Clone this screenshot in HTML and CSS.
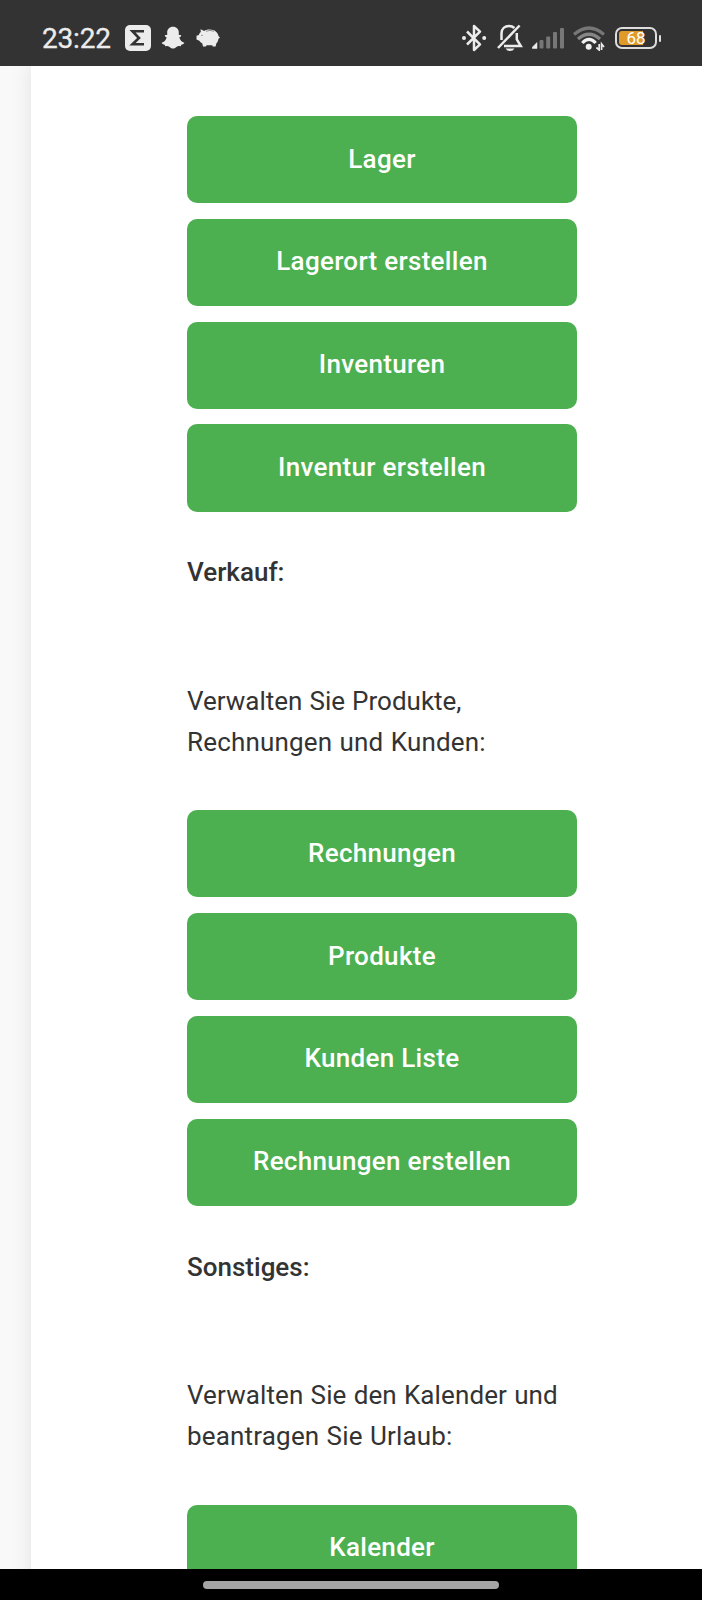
FILE: index.html
```
<!DOCTYPE html>
<html lang="de">
<head>
<meta charset="utf-8">
<title>Lager und Verkauf</title>
<link rel="stylesheet" href="styles.css">
</head>
<body>
<header class="status">
  <div class="status-left">
    <span class="clock">23:22</span>
    <svg class="app-sigma" width="26" height="26" viewBox="0 0 26 26"><rect width="26" height="26" rx="5" fill="#ececec"/><path d="M19 6.200H7.500L14 13L7.500 19.300H19" fill="none" stroke="#333" stroke-width="2.600"/></svg>
    <svg class="app-ghost" width="24" height="24" viewBox="0 0 24 24"><path fill="#ececec" d="M12 .8C8.400.8 6.200 3.300 6.200 6.500V9C5.400 9.300 4.400 8.700 3.900 9.300C3.500 10.200 4.700 11 5.700 11.400C5 14 3 16 .7 16.800C.8 18.200 2.400 18.400 3.700 18.700C4 19.600 4 20.200 4.800 20.200C6 20 7.200 20 8.300 20.700C9.500 21.700 10.500 22.500 12 22.500S14.500 21.700 15.700 20.700C16.800 20 18 20 19.200 20.200C20 20.200 20 19.600 20.300 18.700C21.600 18.400 23.200 18.200 23.300 16.800C21 16 19 14 18.300 11.400C19.300 11 20.500 10.200 20.100 9.300C19.600 8.700 18.600 9.300 17.800 9V6.500C17.800 3.300 15.600.8 12 .8Z"/></svg>
    <svg class="app-pig" width="24" height="20" viewBox="0 0 24 20"><path fill="#ececec" d="M4.500 1.300L8.300 3C10.500 1.200 17 .7 20.300 4C21.800 5.500 22.300 7 22.600 8.300L24 9.500L22.500 10.700C22 13 21.300 14.500 20.300 15.500L19.600 18.600H16.700L16.200 17.200H10.500L10 18.600H7L6.300 15.500C5 14.800 4 13.800 3.300 12.700L.5 11.500V7.800L2.800 7C3.200 5.800 4 4.700 4.800 4.100Z"/><path d="M10 3.300Q14 1.500 18 3.300" fill="none" stroke="#777" stroke-width=".8"/><circle cx="6" cy="7.400" r=".7" fill="#777"/></svg>
  </div>
  <div class="status-right">
    <svg width="26" height="30" viewBox="0 0 26 30"><path d="M6 8.500L19 21.300L13 27V3L19 8.700L6 21.500" fill="none" stroke="#ececec" stroke-width="2.500" stroke-linejoin="round"/><circle cx="3" cy="15" r="2" fill="#ececec"/><circle cx="23.200" cy="15" r="2" fill="#ececec"/></svg>
    <svg class="bell" width="26" height="28" viewBox="0 0 26 28"><g fill="none" stroke="#ececec" stroke-width="2.500"><path d="M4.500 16V9.500C4.500 4.500 8 2 12 2C14.200 2 16 2.700 17.400 4"/><path d="M19.800 9V15.500L23.800 22H7"/><path d="M1 24L22.600 1.500"/></g><path d="M8.500 24.500H17.500Q16 27 13 27T8.500 24.500Z" fill="#ececec"/></svg>
    <svg class="signal" width="33" height="22" viewBox="0 0 33 22"><path d="M0 20.500L5 15.500V21.500H.5Z" fill="#ececec" stroke="#ececec" stroke-width=".5"/><g fill="#777"><rect x="7.500" y="13" width="4" height="8.500" rx="1"/><rect x="14.200" y="9.500" width="4" height="12" rx="1"/><rect x="21" y="5" width="4" height="16.500" rx="1"/><rect x="28" y="1" width="4" height="20.500" rx="1"/></g></svg>
    <svg class="wifi" width="32" height="26" viewBox="0 0 32 26"><g fill="none" stroke-width="3.300"><path d="M1 9.500Q16-3.500 31 9.500" stroke="#777"/><path d="M5 14Q16 4.500 27 14" stroke="#858585"/><path d="M9.300 18Q16 10.800 22.700 18" stroke="#f0f0f0"/></g><circle cx="15.700" cy="21.700" r="3" fill="#f0f0f0"/><path d="M26.200 19V25L23.400 22.500M28.600 25V19L31 22" fill="none" stroke="#ececec" stroke-width="1.700"/></svg>
    <div class="battery"><span class="battery-text">68</span></div>
    <i class="battery-tip"></i>
  </div>
</header>
<main class="page">
  <section class="card">
    <nav class="buttons">
      <a class="btn">Lager</a>
      <a class="btn">Lagerort erstellen</a>
      <a class="btn">Inventuren</a>
      <a class="btn">Inventur erstellen</a>
    </nav>
    <h2 class="title">Verkauf:</h2>
    <p class="text"><span class="line line-tight">Verwalten Sie Produkte,</span><span class="line">Rechnungen und Kunden:</span></p>
    <nav class="buttons">
      <a class="btn">Rechnungen</a>
      <a class="btn">Produkte</a>
      <a class="btn">Kunden Liste</a>
      <a class="btn">Rechnungen erstellen</a>
    </nav>
    <h2 class="title title-low">Sonstiges:</h2>
    <p class="text"><span class="line line-long">Verwalten Sie den Kalender und</span><span class="line">beantragen Sie Urlaub:</span></p>
    <nav class="buttons">
      <a class="btn">Kalender</a>
    </nav>
  </section>
</main>
<footer class="gesture"><i class="handle"></i></footer>
</body>
</html>
```
FILE: styles.css
```
* { box-sizing: border-box; }
body {
  margin: 0;
  height: 1600px;
  display: flex;
  flex-direction: column;
  overflow: hidden;
  background: #f9f9f9;
  color: #333;
  font-family: Roboto, "Liberation Sans", sans-serif;
}
.status {
  flex: none;
  height: 66px;
  padding: 10px 41px 0 42px;
  display: flex;
  align-items: center;
  justify-content: space-between;
  background: #333;
  color: #ececec;
  z-index: 1;
}
.status-left, .status-right { display: flex; align-items: center; }
.clock { width: 83px; padding-top: 1px; font-size: 28px; line-height: 30px; letter-spacing: -0.2px; -webkit-text-stroke: 0.3px #ececec; }
.app-ghost { margin-left: 10px; }
.app-pig { margin-left: 11px; }
.bell { margin-left: 10px; }
.signal { margin-left: 9px; }
.wifi { margin-left: 8px; }
.battery {
  width: 42px;
  height: 22px;
  margin-left: 10px;
  border: 2px solid #ddd;
  border-radius: 7px;
  padding: 2px;
  background: linear-gradient(90deg, #e09a27 0 24px, #333 24px) content-box;
  text-align: center;
}
.battery-text { display: block; margin-top: -2px; font-size: 17px; line-height: 18px; color: #fff; }
.battery-tip { width: 2px; height: 7px; margin-left: 2px; border-radius: 1px; background: #ddd; }
.page { flex: 1; min-height: 0; padding-left: 31px; overflow: hidden; }
.card {
  height: 1700px;
  padding: 50px 125px 0 156px;
  background: #fff;
  box-shadow: 0 0 20px rgba(0, 0, 0, .1);
}
.buttons { display: flex; flex-direction: column; gap: 15.600px; }
.btn {
  height: 87.200px;
  padding-bottom: 2px;
  display: flex;
  align-items: center;
  justify-content: center;
  border-radius: 10px;
  background: #4caf50;
  color: #fff;
  font-size: 26px;
  font-weight: 500;
  letter-spacing: 0.300px;
}
.title { margin: 40.300px 0 88.300px; font-size: 26px; line-height: 40.700px; font-weight: 500; }
.title-low { margin: 41.100px 0 87.800px; }
.text { margin: 0 0 48px; font-size: 26px; line-height: 40.700px; white-space: nowrap; }
.line { display: block; letter-spacing: 0.180px; word-spacing: 0.600px; }
.line-tight { letter-spacing: 0; }
.line-long { letter-spacing: 0.110px; }
.gesture { flex: none; height: 31px; padding: 12px 0 0 203px; background: #000; z-index: 1; }
.handle { display: block; width: 296px; height: 8px; border-radius: 4px; background: #a5a5a5; }
```
